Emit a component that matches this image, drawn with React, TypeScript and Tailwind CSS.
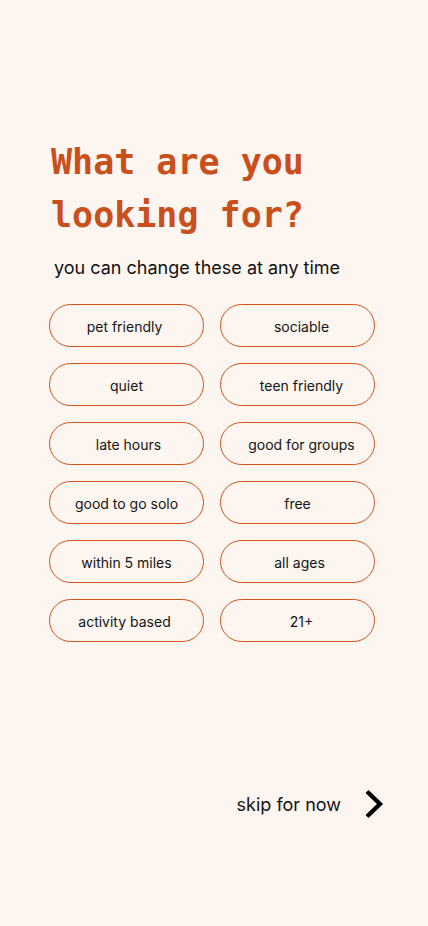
const tags: Array<{ label: string; shift?: string }> = [
  { label: "pet friendly", shift: "-translate-x-[2px]" },
  { label: "sociable", shift: "translate-x-[4px]" },
  { label: "quiet" },
  { label: "teen friendly", shift: "translate-x-[4px]" },
  { label: "late hours", shift: "translate-x-[2px]" },
  { label: "good for groups", shift: "translate-x-[4px]" },
  { label: "good to go solo" },
  { label: "free" },
  { label: "within 5 miles" },
  { label: "all ages", shift: "translate-x-[2px]" },
  { label: "activity based", shift: "-translate-x-[2px]" },
  { label: "21+", shift: "translate-x-[4px]" },
];

export default function App() {
  return (
    <div className="min-h-[926px] w-full bg-[#fdf6f0] font-['Inter','Noto_Sans',sans-serif] text-[#1a1a1a]">
      <div className="pl-[49px] pr-[53px] pt-[136px]">
        <h1 className="pl-[2px] font-['DejaVu_Sans_Mono','Liberation_Mono',monospace] text-[35px] font-bold leading-[53px] text-[#c94f1c]">
          What are you
          <br />
          looking for?
        </h1>
        <p className="mt-[12px] pl-[5px] text-[18px] leading-[28px] text-[#111]">
          you can change these at any time
        </p>
        <div className="mt-[22px] grid grid-cols-2 gap-x-[16px] gap-y-[16px]">
          {tags.map((t) => (
            <button
              key={t.label}
              className="flex h-[43px] items-center justify-center rounded-full border border-[#d0521a] text-[14px] text-[#141414]"
            >
              <span className={`translate-y-[1px] ${t.shift ?? ""}`}>{t.label}</span>
            </button>
          ))}
        </div>
      </div>
      <div className="mt-[147px] flex items-center justify-end pr-[44px]">
        <span className="text-[18px] text-[#111]">skip for now</span>
        <svg
          className="ml-[23px]"
          width="20"
          height="30"
          viewBox="0 0 20 30"
          fill="none"
          stroke="black"
          strokeWidth="4.3"
          strokeLinejoin="miter"
        >
          <polyline points="3,2.5 16,15 3,27.5" />
        </svg>
      </div>
    </div>
  );
}
